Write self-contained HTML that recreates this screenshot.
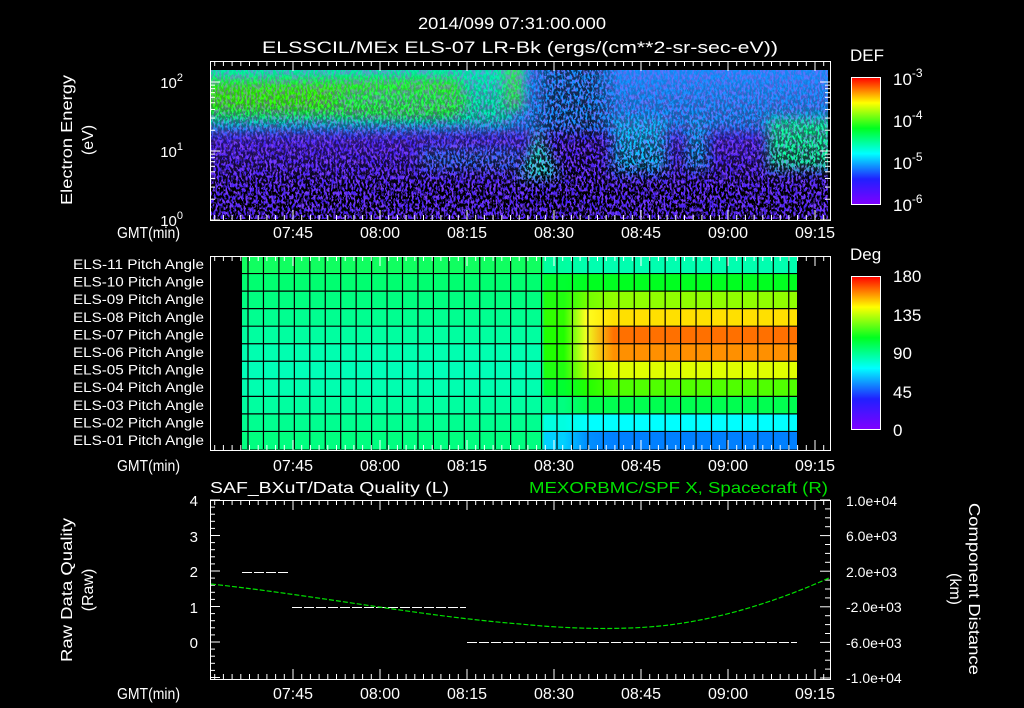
<!DOCTYPE html>
<html><head><meta charset="utf-8"><style>
html,body{margin:0;padding:0;background:#000;width:1024px;height:708px;overflow:hidden}
svg text{font-family:"Liberation Sans",sans-serif;fill:#fff}
</style></head><body>
<svg id="s" width="1024" height="708" viewBox="0 0 1024 708" xmlns="http://www.w3.org/2000/svg">
<defs>
<linearGradient id="cbar" x1="0" y1="1" x2="0" y2="0">
<stop offset="0" stop-color="#8000ff"/><stop offset="0.2" stop-color="#2020ff"/><stop offset="0.4" stop-color="#00ffff"/><stop offset="0.6" stop-color="#00ff20"/><stop offset="0.8" stop-color="#ffff00"/><stop offset="1" stop-color="#ff0000"/>
</linearGradient>
<linearGradient id="dens" x1="0" y1="0" x2="0" y2="1">
<stop offset="0" stop-color="#fff" stop-opacity="0.05"/><stop offset="0.4" stop-color="#fff" stop-opacity="0.4"/><stop offset="0.8" stop-color="#fff" stop-opacity="1"/><stop offset="1" stop-color="#fff" stop-opacity="1"/>
</linearGradient>
<linearGradient id="mid" x1="0" y1="0" x2="1" y2="0">
<stop offset="0" stop-color="#fff" stop-opacity="0"/><stop offset="0.3" stop-color="#fff" stop-opacity="0.6"/><stop offset="0.7" stop-color="#fff" stop-opacity="0.6"/><stop offset="1" stop-color="#fff" stop-opacity="0"/>
</linearGradient>
<mask id="dm"><rect x="211" y="70" width="617" height="149" fill="url(#dens)"/></mask>
<mask id="mm"><rect x="525" y="70" width="95" height="149" fill="url(#mid)"/></mask>
<filter id="bl" x="-50%" y="-50%" width="200%" height="200%"><feGaussianBlur stdDeviation="6"/></filter>
<filter id="speck" x="0" y="0" width="100%" height="100%">
<feTurbulence type="fractalNoise" baseFrequency="0.5 0.25" numOctaves="2" seed="3"/>
<feColorMatrix type="matrix" values="0 0 0 0 0  0 0 0 0 0  0 0 0 0 0  -12 0 0 0 6.6"/>
</filter>
<filter id="speck2" x="0" y="0" width="100%" height="100%">
<feTurbulence type="fractalNoise" baseFrequency="0.5 0.2" numOctaves="2" seed="11"/>
<feColorMatrix type="matrix" values="0 0 0 0 0.4  0 0 0 0 0.1  0 0 0 0 1  -12 0 0 0 6.3"/>
</filter>
<clipPath id="cp"><rect x="211" y="70" width="617" height="149"/></clipPath>
</defs>

<text x="512" y="29" font-size="17" text-anchor="middle" textLength="188" lengthAdjust="spacingAndGlyphs">2014/099 07:31:00.000</text>
<text x="520" y="53" font-size="17" text-anchor="middle" textLength="516" lengthAdjust="spacingAndGlyphs">ELSSCIL/MEx ELS-07 LR-Bk  (ergs/(cm**2-sr-sec-eV))</text>

<g clip-path="url(#cp)">
<rect x="211" y="70" width="617" height="149" fill="#4a22f0"/>
<rect x="190" y="50" width="660" height="82" fill="#1890ff" filter="url(#bl)"/>
<rect x="190" y="50" width="320" height="74" fill="#00f0b0" filter="url(#bl)"/>
<rect x="200" y="80" width="260" height="34" fill="#30ff10" filter="url(#bl)"/>
<ellipse cx="400" cy="100" rx="70" ry="14" fill="#20ff50" filter="url(#bl)"/>
<rect x="505" y="60" width="18" height="50" fill="#30ff50" filter="url(#bl)"/>
<path d="M518 180 L538 125 L560 178 Z" fill="#20e8d0" filter="url(#bl)"/>
<rect x="612" y="118" width="55" height="55" fill="#10c0ff" filter="url(#bl)"/>
<rect x="686" y="118" width="22" height="52" fill="#10a8ff" filter="url(#bl)"/>
<rect x="768" y="118" width="80" height="52" fill="#10ffa0" filter="url(#bl)"/>
<rect x="420" y="148" width="100" height="22" fill="#2090ff" filter="url(#bl)" opacity="0.7"/>
<rect x="211" y="70" width="617" height="149" filter="url(#speck2)" opacity="0.45"/>
<g mask="url(#dm)"><rect x="211" y="70" width="617" height="149" filter="url(#speck)"/></g>
<g mask="url(#mm)"><rect x="525" y="70" width="95" height="149" filter="url(#speck)"/></g>
</g>

<g id="pitch"></g>
<g id="ax" stroke="#fff" stroke-width="1" fill="none"></g>
<g id="tx"></g>

<rect x="851.5" y="77.5" width="29" height="127" fill="url(#cbar)" stroke="#fff"/>
<text x="850" y="61" font-size="17">DEF</text>
<text x="893" y="85" font-size="17">10<tspan dy="-8" font-size="12">-3</tspan></text>
<text x="893" y="127" font-size="17">10<tspan dy="-8" font-size="12">-4</tspan></text>
<text x="893" y="169" font-size="17">10<tspan dy="-8" font-size="12">-5</tspan></text>
<text x="893" y="211" font-size="17">10<tspan dy="-8" font-size="12">-6</tspan></text>
<rect x="851.5" y="276.5" width="29" height="153" fill="url(#cbar)" stroke="#fff"/>
<text x="850" y="260" font-size="17">Deg</text>
<text x="893" y="282" font-size="17">180</text>
<text x="893" y="321" font-size="17">135</text>
<text x="893" y="359" font-size="17">90</text>
<text x="893" y="398" font-size="17">45</text>
<text x="893" y="436" font-size="17">0</text>

<text transform="translate(72,140) rotate(-90)" font-size="16" text-anchor="middle" textLength="130" lengthAdjust="spacingAndGlyphs">Electron Energy</text>
<text transform="translate(93,140) rotate(-90)" font-size="16" text-anchor="middle">(eV)</text>
<text transform="translate(72,590) rotate(-90)" font-size="16" text-anchor="middle" textLength="144" lengthAdjust="spacingAndGlyphs">Raw Data Quality</text>
<text transform="translate(93,590) rotate(-90)" font-size="16" text-anchor="middle">(Raw)</text>
<text transform="translate(969,589) rotate(90)" font-size="16" text-anchor="middle" textLength="172" lengthAdjust="spacingAndGlyphs">Component Distance</text>
<text transform="translate(950,589) rotate(90)" font-size="16" text-anchor="middle">(km)</text>

<text x="183" y="88" font-size="15" text-anchor="end">10<tspan dy="-7" font-size="11">2</tspan></text>
<text x="183" y="157" font-size="15" text-anchor="end">10<tspan dy="-7" font-size="11">1</tspan></text>
<text x="183" y="226" font-size="15" text-anchor="end">10<tspan dy="-7" font-size="11">0</tspan></text>

<text x="210" y="493" font-size="16" textLength="239" lengthAdjust="spacingAndGlyphs">SAF_BXuT/Data Quality (L)</text>
<text x="828" y="493" font-size="16" text-anchor="end" textLength="299" lengthAdjust="spacingAndGlyphs" style="fill:#00e000">MEXORBMC/SPF X, Spacecraft (R)</text>

<text x="198" y="506" font-size="15" text-anchor="end">4</text>
<text x="198" y="542" font-size="15" text-anchor="end">3</text>
<text x="198" y="577" font-size="15" text-anchor="end">2</text>
<text x="198" y="613" font-size="15" text-anchor="end">1</text>
<text x="198" y="648" font-size="15" text-anchor="end">0</text>
<g font-size="14">
<text x="846" y="506">1.0e+04</text>
<text x="846" y="541">6.0e+03</text>
<text x="846" y="577">2.0e+03</text>
<text x="846" y="612">-2.0e+03</text>
<text x="846" y="648">-6.0e+03</text>
<text x="846" y="683">-1.0e+04</text>
</g>

<g stroke="#fff" stroke-width="1" stroke-dasharray="10 2">
<line x1="242" y1="572.5" x2="290" y2="572.5"/>
<line x1="292" y1="607.5" x2="466" y2="607.5"/>
<line x1="467" y1="642.5" x2="797" y2="642.5"/>
</g>
<path d="M211 584 C 320 596, 420 616, 520 624 C 570 629, 620 630, 660 626 C 720 620, 780 600, 829 578" stroke="#00e000" stroke-width="1.2" fill="none" stroke-dasharray="5 2"/>
</svg>
<script>
const NS="http://www.w3.org/2000/svg";
function el(p,t,a,txt){const e=document.createElementNS(NS,t);for(const k in a)e.setAttribute(k,a[k]);if(txt!==undefined)e.textContent=txt;p.appendChild(e);return e;}
const ax=document.getElementById('ax'),tx=document.getElementById('tx'),pg=document.getElementById('pitch');
const left=["#10ff60","#00ff70","#00ff80","#00ff90","#00ffa0","#00ffb0","#00ffb8","#00ffb0","#00ffa0","#00ff90","#00ff80"];
const mid =["#00ffa0","#00ff30","#20ff10","#30ff00","#20ff00","#20ff00","#20ff10","#00ff30","#00ff80","#00ffe0","#00d0ff"];
const mid2=["#00ffb0","#00ff20","#70ff00","#ffff20","#f0ff20","#f0ff20","#b0ff00","#20ff00","#00ff50","#00ffff","#0090ff"];
const right=["#00ffb0","#00ff20","#90ff00","#ffe000","#ff7000","#ff9000","#e0ff00","#50ff00","#00ff50","#00ffff","#0080ff"];
const defs=document.querySelector('defs');
const top0=256,rh=(449-256)/11;
for(let i=0;i<11;i++){
  const g=el(defs,'linearGradient',{id:'r'+i,x1:0,y1:0,x2:1,y2:0});
  [[0,left[i]],[0.54,left[i]],[0.545,mid[i]],[0.58,mid[i]],[0.62,mid2[i]],[0.67,right[i]],[1,right[i]]].forEach(s=>el(g,'stop',{offset:s[0],'stop-color':s[1]}));
  el(pg,'rect',{x:242,y:top0+i*rh,width:555,height:rh+0.5,fill:'url(#r'+i+')'});
  if(i>0) el(pg,'line',{x1:242,x2:797,y1:top0+i*rh,y2:top0+i*rh,stroke:'#000','stroke-width':1.2});
}
for(let x=248;x<797;x+=15.45) el(pg,'line',{x1:x,x2:x,y1:256,y2:449,stroke:'#000','stroke-width':1.2});
const labs=["ELS-11","ELS-10","ELS-09","ELS-08","ELS-07","ELS-06","ELS-05","ELS-04","ELS-03","ELS-02","ELS-01"];
labs.forEach((l,i)=>el(tx,'text',{x:204,y:269+i*17.6,'font-size':13.5,'text-anchor':'end',textLength:131,lengthAdjust:'spacingAndGlyphs'},l+" Pitch Angle"));
const frames=[[210,61,830,220],[210,256,830,450],[210,500,830,679]];
frames.forEach(f=>{
  el(ax,'rect',{x:f[0]+0.5,y:f[1]+0.5,width:f[2]-f[0],height:f[3]-f[1]});
  for(let n=0;;n++){const x=206+8.7*n;if(x>829)break;if(x<211)continue;
    const L=(n%10===0)?10:5;
    el(ax,'line',{x1:x,x2:x,y1:f[1],y2:f[1]+L});
    el(ax,'line',{x1:x,x2:x,y1:f[3],y2:f[3]-L});
  }
});
const times=["07:45","08:00","08:15","08:30","08:45","09:00","09:15"];
[231,464,692].forEach(y=>{
  times.forEach((t,k)=>el(tx,'text',{x:293+87*k,y:y+7,'font-size':15.5,'text-anchor':'middle',textLength:40,lengthAdjust:'spacingAndGlyphs'},t));
  el(tx,'text',{x:180,y:y+7,'font-size':15.5,'text-anchor':'end',textLength:63,lengthAdjust:'spacingAndGlyphs'},'GMT(min)');
});
for(let d=0;d<3;d++)for(let m=1;m<10;m++){
  const y=220-69*(d+Math.log10(m));if(y<62)continue;
  const L=m===1?10:5;
  el(ax,'line',{x1:210,x2:210+L,y1:y,y2:y});el(ax,'line',{x1:830,x2:830-L,y1:y,y2:y});
}
for(let k=0;k<=25;k++){const y=500+7.1*k;if(y>679)break;const maj=k%5===0;
  el(ax,'line',{x1:210,x2:210+(maj?10:5),y1:y,y2:y});}
for(let k=0;k<=20;k++){const y=500+8.9*k;if(y>679)break;const maj=k%4===0;
  el(ax,'line',{x1:830,x2:830-(maj?10:5),y1:y,y2:y});}
</script>
</body></html>
